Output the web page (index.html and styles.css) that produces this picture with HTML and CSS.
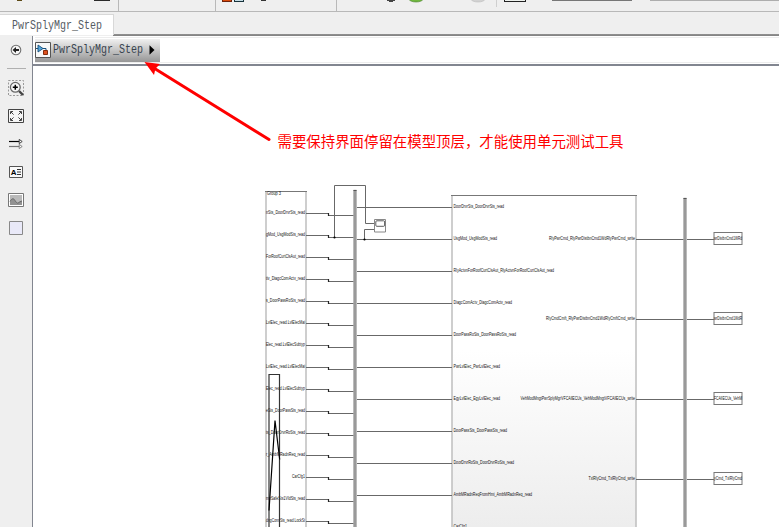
FILE: index.html
```
<!DOCTYPE html>
<html lang="zh-CN">
<head>
<meta charset="utf-8">
<title>PwrSplyMgr_Step</title>
<link rel="stylesheet" href="styles.css">
</head>
<body>
<div class="app">
  <header class="toolbar">
    <svg width="779" height="11" viewBox="0 0 779 11" shape-rendering="crispEdges">
      <path d="M17 0h5v1h-5z" fill="#5d4a16"/>
      <path d="M94 0h16v1h-16z" fill="#2b2b2b"/>
      <path d="M118 0h1v11h-1zM215 0h1v11h-1zM336 0h1v11h-1z" fill="#b9b9b9"/>
      <path d="M222 0h10v2h-10z" fill="#6f230c"/><path d="M223 0h8v1h-8z" fill="#d94a0b"/>
      <path d="M234 0h10v2h-10z" fill="#17323b"/><path d="M235 0h8v1h-8z" fill="#c5dce5"/>
      <path d="M261 0h5v1h-5z" fill="#333"/>
      <path d="M387 0h8v1h-8zM389 1h4v1h-4z" fill="#444"/>
      <g shape-rendering="auto"><ellipse cx="416" cy="-1" rx="7" ry="3" fill="#70b83e" stroke="#477d2a" stroke-width=".6"/>
      <ellipse cx="478" cy="-1" rx="7" ry="3" fill="#d2d2d2" stroke="#bbb" stroke-width=".6"/></g>
      <path d="M496 0h1v7h-1z" fill="#cfcfcf"/>
      <path d="M504 0h22v2h-22z" fill="#222"/><path d="M505 0h20v1h-20z" fill="#eef2ee"/>
      <path d="M552 0h80v1h-80z" fill="#777"/><path d="M650 0h129v1h-129z" fill="#adadad"/>
    </svg>
  </header>
  <nav class="tabs"><div class="tab"><span class="mono">PwrSplyMgr_Step</span></div></nav>
  <div class="workspace">
    <aside class="sidebar">
      <svg class="tool back" width="16" height="16" viewBox="0 0 16 16"><circle cx="8" cy="8" r="4.8" fill="#f5f5f5" stroke="#707070" stroke-width="1.1"/><path d="M4.5 8 8 5v2h3v2H8v2z" fill="#222"/></svg>
      <div class="rule"></div>
      <svg class="tool" width="16" height="16" viewBox="0 0 16 16"><rect x=".5" y=".5" width="15" height="15" fill="none" stroke="#999" stroke-dasharray="2 1.5"/><path d="m11 11 4 4" stroke="#444" stroke-width="2.4"/><circle cx="7.3" cy="7.3" r="4.9" fill="#f7f7f7" stroke="#686868" stroke-width="1.3"/><path d="M4.8 7.3h5M7.3 4.8v5" stroke="#000" stroke-width="1.5"/></svg>
      <svg class="tool" width="16" height="16" viewBox="0 0 16 16"><path d="M.5 1.5h15v13H.5z" fill="#f5f5f5" stroke="#444"/><path d="M2.5 6V3.5H5M11 3.5h2.5V6M13.5 10v2.5H11M5 12.5H2.5V10M3 4l2.6 2.6M13 4l-2.6 2.6M3 12l2.6-2.6M13 12l-2.6-2.6" fill="none" stroke="#444"/></svg>
      <svg class="tool" width="16" height="16" viewBox="0 0 16 16"><path d="M1 5.5h11" stroke="#000" stroke-width="1.2"/><path d="M1 10.5h11" stroke="#777" stroke-width="1.2"/><path d="m11.2 3.4 3 2.1-3 2.1z" fill="#fff" stroke="#333" stroke-width=".9"/><path d="m11.2 8.4 3 2.1-3 2.1z" fill="#fff" stroke="#777" stroke-width=".9"/></svg>
      <svg class="tool" width="16" height="16" viewBox="0 0 16 16"><path d="M1.5 2.5h13v11h-13z" fill="#fafafa" stroke="#555"/><text class="glyph" x="2.8" y="10.8">A</text><path d="M9 5.5h4M9 8h4M9 10.5h4" stroke="#333" stroke-width="1"/></svg>
      <svg class="tool" width="16" height="16" viewBox="0 0 16 16"><path d="M.5 1.5h15v13H.5z" fill="#fff" stroke="#777"/><path d="M2 3h12v10H2z" fill="#b9b9b9"/><path d="M2 9.5C4 6 5.5 6 7 8.5s3 3.5 4.3 1.5L14 9v4H2z" fill="#929292"/><path d="M2 9.5C4 6 5.5 6 7 8.5s3 3.5 4.3 1.5L14 9" fill="none" stroke="#666"/></svg>
      <svg class="tool" width="16" height="16" viewBox="0 0 16 16"><path d="M1.5 1.5h13v13h-13z" fill="#e9e9f8" stroke="#888"/></svg>
    </aside>
    <main class="editor">
      <div class="pathbar">
        <div class="crumb">
          <svg width="16" height="16" viewBox="0 0 16 16"><path d="M.5.5h15v15H.5z" fill="#f8f8f8" stroke="#555"/><path d="M3 3v7l5-3.5z" fill="#55a6da" stroke="#174f7b" stroke-width=".9"/><path d="M1 6.5h2M8 6.5h3v3" fill="none" stroke="#174f7b"/><path d="M8.5 8.5h4v4h-4z" fill="#df511e" stroke="#852b0b"/></svg>
          <span class="mono">PwrSplyMgr_Step</span>
          <svg class="chevron" width="6" height="10" viewBox="0 0 6 10"><path d="m.5.3 5 4.7-5 4.7z" fill="#000"/></svg>
        </div>
      </div>
      <svg class="canvas" id="canvas" width="746" height="461" viewBox="33 66 746 461">
        <defs>
          <linearGradient id="shade" gradientUnits="userSpaceOnUse" x1="0" y1="350" x2="0" y2="527"><stop offset="0" stop-color="#fff"/><stop offset="1" stop-color="#ededed"/></linearGradient>
        </defs>
        <text class="note" x="277.5" y="147" textLength="346" lengthAdjust="spacingAndGlyphs">需要保持界面停留在模型顶层，才能使用单元测试工具</text>
        <path class="side" d="M266 191V528M306 191V528"/><path class="edge" d="M265 191.5H307"/>
        <text class="port" x="267" y="195.3" textLength="14" lengthAdjust="spacingAndGlyphs">Group 3</text>
        <path d="M452 195H636V530H452z" fill="url(#shade)"/>
        <path class="side" d="M452 195V528M636 195V528"/><path class="edge" d="M451 195.5H637"/>
        <g id="signals"></g>
        <path class="wire" d="M334.5 237.5V185.5H365.5V223.5H374M364.5 239.5V229.5H374"/>
        <circle cx="334.5" cy="237.5" r="1.1"/><circle cx="364.5" cy="239.5" r="1.1"/>
        <path d="M374.5 219.5h11v12.5h-11z" fill="#fff" stroke="#888"/><rect x="375.8" y="220.8" width="8.8" height="5.5" rx="1" fill="#fff" stroke="#333" stroke-width=".8"/>
        <path d="M353.5 190h3v337h-3zM683.5 198h3v329h-3z" fill="#999" stroke="#aaa" stroke-width=".5"/><path d="M353.5 190.5h3M683.5 198.5h3" stroke="#555"/>
        <path d="M269 528V374.5H279.5V528" fill="none" stroke="#333" stroke-width="1.2"/>
        <path d="M269 510.5 275 420.5 279.7 459.5" fill="none" stroke="#000" stroke-width="1.2"/>
      </svg>
    </main>
  </div>
  <svg class="pointer" width="128" height="82" viewBox="144 61 128 82"><path d="M269 139.5 153 67.5" stroke="#f00" stroke-width="3" stroke-linecap="round"/><path d="m144.5 62 15.500 2-4.500 4.500-1.500 6.500z" fill="#f00"/></svg>
</div>
<script src="diagram.js"></script>
</body>
</html>
```
FILE: styles.css
```
* { box-sizing: border-box; }
body { margin: 0; background: #efefef; overflow: hidden; }
svg { display: block; flex: none; }
.app { position: relative; width: 779px; height: 527px; display: flex; flex-direction: column; }
.toolbar { height: 12px; flex: none; border-bottom: 1px solid #b8b8b8; }
.tabs { height: 24px; flex: none; padding-top: 2px; background: linear-gradient(#929292, #818181) 113px 22px / 100% 2px no-repeat; }
.tab { width: 114px; height: 21px; padding: 4px 0 0 12px; background: #fff; border: solid #d8d8d8; border-width: 1px 1px 0 0; }
.mono { display: block; width: 90px; height: 14px; font: 12px/14px "Liberation Mono", monospace; color: #555b63; white-space: nowrap; transform: scaleX(.833); transform-origin: left; }
.workspace { flex: 1; min-height: 0; display: flex; }
.sidebar { width: 32px; flex: none; display: flex; flex-direction: column; align-items: center; gap: 12px; padding-top: 6px; }
.back { margin-bottom: -2px; }
.rule { width: 19px; height: 1px; background: #b0b0b0; margin-bottom: -1px; }
.editor { width: 747px; border-left: 1px solid #828690; background: #fff; }
.pathbar { height: 30px; padding: 1px 0 0 2px; border-bottom: 2px solid #828690; }
.pathbar::before { content: ""; display: block; height: 1px; background: #ededed; }
.pathbar::after { content: ""; display: block; height: 1px; background: #ededed; }
.crumb { width: 125px; height: 23px; margin-top: 1px; display: flex; align-items: center; gap: 2px; padding: 0 0 1px; background: linear-gradient(#f0f0f0, #c5c5c5 48%, #969696); }
.crumb .mono { color: #394450; }
.chevron { margin-left: 4px; }
.glyph { font: bold 8px "Liberation Sans", sans-serif; }
.note { font: 14.4px "Noto Sans CJK SC", sans-serif; fill: #f00; }
.port { font: 4.6px "Liberation Sans", sans-serif; fill: #111; }
.wire { fill: none; stroke: #686868; stroke-width: 1; }
.side { fill: none; stroke: #bfbfbf; stroke-width: 1.5; }
.edge { fill: none; stroke: #777; stroke-width: 1; }
.pointer { position: absolute; left: 144px; top: 61px; }
```
FILE: diagram.js
```
const layer = document.getElementById("signals");
function add(tag, attrs, text) {
  const el = document.createElementNS("http://www.w3.org/2000/svg", tag);
  for (const key in attrs) el.setAttribute(key, attrs[key]);
  if (text) el.textContent = text;
  layer.appendChild(el);
}
function label(text, start, end, y) {
  add("text", { class: "port", x: start, y, textLength: end - start, lengthAdjust: "spacingAndGlyphs" }, text);
}
function wire(d) { add("path", { class: "wire", d }); }

["nSts_DoorDrvrSts_read", "gMod_UsgModSts_read", "ForRoofCurtClsAut_read", "tiv_DiagcComActv_read",
 "s_DoorPassRoSts_read", "LvlElec_read.LvlElecMai", "Elec_read.LvlElecSubtyp", "LvlElec_read.LvlElecMai",
 "Elec_read.LvlElecSubtyp", "eSts_DoorPassSts_read", "ts_DoorDrvrRoSts_read", "r_AmbMRadnReq_read",
 "CarCfg1", "mnSafeSts1VldSts_read", "dngConnSts_read.LockSt"].forEach((name, i) => {
  const y = 213.5 + i * 22;
  wire(`M306 ${y}H328.5V${y + 2}H354`);
  add("rect", { x: 327.9, y: y - .5, width: 1.2, height: 3, fill: "#222" });
  label(name, name === "CarCfg1" ? 292 : 266, 305, y + .9);
});

[["DoorDrvrSts_DoorDrvrSts_read", 504], ["UsgMod_UsgModSts_read", 497],
 ["RlyActvnForRoofCurtClsAut_RlyActvnForRoofCurtClsAut_read", 554], ["DiagcComActv_DiagcComActv_read", 512],
 ["DoorPassRoSts_DoorPassRoSts_read", 516], ["PwrLvlElec_PwrLvlElec_read", 500],
 ["EgyLvlElec_EgyLvlElec_read", 500], ["DoorPassSts_DoorPassSts_read", 507],
 ["DoorDrvrRoSts_DoorDrvrRoSts_read", 514], ["AmbMRadnReqFromHmi_AmbMRadnReq_read", 532],
 ["CarCfg1", 467]].forEach(([name, end], i) => {
  const y = 207.5 + i * 32;
  wire(`M357 ${y}H452`);
  label(name, 453.5, end, y + .9);
});

[["RlyPwrCmd_RlyPwrDistbnCmd1WdRlyPwrCmd_write", 549, "wrDistbnCmd1WRd"],
 ["RlyCmdCmft_RlyPwrDistbnCmd1WdRlyCmftCmd_write", 546, "wrDistbnCmd1WdR"],
 ["VehModMngtPwrSplyMgrVFCAllECUs_VehModMngtVFCAllECUs_write", 520.5, "FCAllECUs_VehM"],
 ["TxlRlyCmd_TxlRlyCmd_write", 588.5, "yCmd_TxlRlyCmd"]].forEach(([name, start, out], i) => {
  const y = 239.5 + i * 80;
  wire(`M636 ${y}H684M687 ${y}H714`);
  label(name, start, 635, y + .9);
  add("rect", { x: 714, y: y - 7, width: 28, height: 12, fill: "#fff", stroke: "#777" });
  label(out, 714, 742, y + .7);
});
```
